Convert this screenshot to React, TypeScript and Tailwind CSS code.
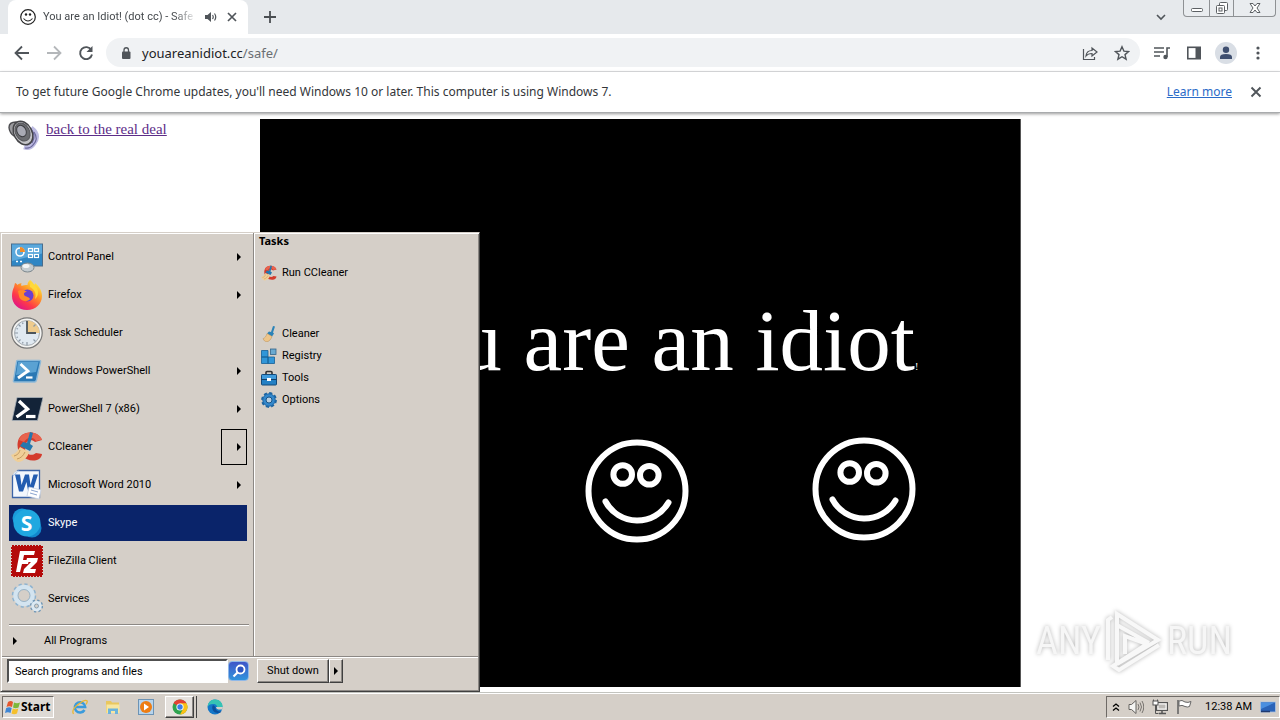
import type { ReactNode } from "react";

function Glyph({ size = "h-4 w-4", box = "0 0 16 16", children }: { size?: string; box?: string; children: ReactNode }) {
  return (
    <svg viewBox={box} className={`${size} shrink-0`} fill="none" aria-hidden="true">
      {children}
    </svg>
  );
}

const raised = "border border-t-white border-l-white border-r-[#404040] border-b-[#404040] shadow-[inset_-1px_-1px_0_#8c8884]";
const sunken = "border border-t-[#6e6a66] border-l-[#6e6a66] border-r-white border-b-white";

/* ---------- Program icons (32 x 32) ---------- */

function ControlPanelIcon() {
  return (
    <Glyph size="h-8 w-8" box="0 0 32 32">
      <rect x="0.5" y="3" width="31" height="22" fill="#2f86c4" stroke="#4a6c8a" />
      <path d="M1 3.500h30v9L1 20z" fill="#5aa8dc" />
      <circle cx="9" cy="11" r="4" stroke="#fff" strokeWidth="1.600" />
      <path d="M9 11V6a5 5 0 0 1 5 5z" fill="#f28c28" />
      <g stroke="#fff" strokeWidth="1.200">
        <rect x="17.500" y="7.500" width="4" height="3" />
        <rect x="23.500" y="7.500" width="4" height="3" />
        <rect x="17.500" y="13.500" width="4" height="3" />
        <rect x="23.500" y="13.500" width="4" height="3" />
      </g>
      <path d="M5 20.500h2M9 20.500h2" stroke="#fff" strokeWidth="1.500" />
      <ellipse cx="16.500" cy="26.500" rx="6.500" ry="4.500" fill="#c4ccd0" stroke="#7c878d" />
      <ellipse cx="15" cy="25" rx="3.500" ry="2" fill="#f2f5f6" />
    </Glyph>
  );
}

function FirefoxIcon() {
  return (
    <Glyph size="h-8 w-8" box="0 0 32 32">
      <defs>
        <linearGradient id="fx" x1="26" y1="3" x2="7" y2="29" gradientUnits="userSpaceOnUse">
          <stop offset="0" stopColor="#fff142" />
          <stop offset="0.35" stopColor="#ff9a26" />
          <stop offset="0.7" stopColor="#ff3b47" />
          <stop offset="1" stopColor="#e01587" />
        </linearGradient>
      </defs>
      <path d="M19 1c2 1 3 3 4 5 1-.5 1-1.500 1-2 3 2 7 7 7 13 0 8-6.500 14-15 14S1 25 1 17c0-4 1-7 2-9l1-4c1 0 2 1 2.500 2 1-1 2-1.500 4-2-.5 1-.5 2 0 3 2-1 4-1 6-1 0-2 1-4 2.500-5z" fill="url(#fx)" />
      <circle cx="16.500" cy="16.500" r="6" fill="#6b3fd0" />
      <path d="M7 12c3-2 7-1 9 1-3 0-4 2-2 4 2 1 4 1 5 3-3 4-10 2-11-3z" fill="#ff8a26" />
      <path d="M19 8c4 2 7 6 5 12 3-2 4-7 2-11-2-3-4-5-6-6-1 1-1 3-1 5z" fill="#ffd93a" />
    </Glyph>
  );
}

function ClockIcon() {
  return (
    <Glyph size="h-8 w-8" box="0 0 32 32">
      <circle cx="16" cy="16" r="15.200" fill="#f4f4f2" stroke="#777" strokeWidth="1.200" />
      <circle cx="16" cy="16" r="12.500" fill="#e0e9f1" stroke="#a7adb2" />
      <path d="M16 16V3.500A12.500 12.500 0 0 1 28.500 16z" fill="#eecb8d" />
      <g stroke="#8b98a4" strokeWidth="1.200">
        <path d="M16 25v3M4 16h3M7.500 7.500l2 2M7.500 24.500l2-2M24.500 24.500l-2-2M24.500 7.500l-2 2M5.500 11.500l1.500.5M11.500 5.500l.5 1.500M5.500 20.500l1.500-.5M11.500 26.500l.5-1.500" />
      </g>
      <path d="M16 4v12h9" stroke="#4c555c" strokeWidth="1.800" />
    </Glyph>
  );
}

function PowerShellIcon({ dark = false }: { dark?: boolean }) {
  return dark ? (
    <Glyph size="h-8 w-8" box="0 0 32 32">
      <path d="M6 4.500h26L26.500 27.500H1z" fill="#132338" stroke="#a9b2ba" strokeWidth="0.800" />
      <path d="M8 8l8.500 8L5.500 24" stroke="#fff" strokeWidth="3.400" />
      <path d="M15 23.500h9.500" stroke="#fff" strokeWidth="3.200" />
    </Glyph>
  ) : (
    <Glyph size="h-8 w-8" box="0 0 32 32">
      <path d="M6.500 5.500h22q1.500 0 1 1.500l-4 18q-.5 2-2 2h-20q-1.500 0-1-1.500l3-18.500q0-1.500 1-1.500z" fill="#2a78b4" stroke="#8db9d8" strokeWidth="1.400" />
      <path d="M7 7h20.500L25 17 5 20z" fill="#5aa2d3" />
      <path d="M9.500 9l7.500 7-10 7" stroke="#fff" strokeWidth="2.800" />
      <path d="M15 22.500h6.500" stroke="#fff" strokeWidth="2.200" />
    </Glyph>
  );
}

function CCleanerIcon({ size = "h-8 w-8" }: { size?: string }) {
  return (
    <Glyph size={size} box="0 0 32 32">
      <path d="M31 9C27-1 10-1 7 10c-3 12 8 22 19 19 3-1 5-4 5-6l-6-1c-5 4-11 1-11-5 0-7 6-10 10-6z" fill="#d43b2c" />
      <path d="M31 8.500C27-1 11-.5 8 9l5 2c3-5 9-6 12-1z" fill="#e8634e" />
      <path d="M19 1l3 1-3 11 3 2-3 5-10-5 3-4 4 1z" fill="#2478ae" />
      <path d="M9 16l9 5c-1 5-5 9-10 10-3 0-5-2-8-7 4-1 6-3 9-8z" fill="#f0cf98" />
      <path d="M9 19c-1 4-3 5-6 6M14 21c-2 4-4 6-8 7" stroke="#c59a61" />
    </Glyph>
  );
}

function WordIcon() {
  return (
    <Glyph size="h-8 w-8" box="0 0 32 32">
      <path d="M7 1.500h21.500v27h-27V7z" fill="#f3f7fd" stroke="#3c64a8" strokeWidth="1.300" />
      <path d="M1.500 7.500L8 1.500q-5.500.5-6.500 6z" fill="#dce8f6" />
      <path d="M4 5.500h5l1.500 10.500L14 5.500h4L19.500 16 22.500 5.500H27l-5.500 17h-4.300L15.500 13 12 22.500H8z" fill="#235cb0" />
      <path d="M18 18l12 3-2 9-12-3z" fill="#fff" stroke="#c5d0e2" strokeWidth="0.800" />
      <path d="M20 21l7 2M19 24l7 2" stroke="#8ba5cf" />
    </Glyph>
  );
}

function SkypeIcon() {
  return (
    <Glyph size="h-8 w-8" box="0 0 32 32">
      <circle cx="11" cy="11" r="9.500" fill="#1a9bdb" />
      <circle cx="21" cy="21" r="9.500" fill="#1187cd" />
      <circle cx="16" cy="16" r="13.500" fill="#20a8e0" />
      <text x="15.500" y="23.500" textAnchor="middle" fontFamily="Open Sans, sans-serif" fontWeight="700" fontSize="21" fill="#fff">S</text>
    </Glyph>
  );
}

function FileZillaIcon() {
  return (
    <Glyph size="h-8 w-8" box="0 0 32 32">
      <rect x="1" y="1" width="30" height="30" fill="#b40a0a" stroke="#b40a0a" strokeWidth="2" strokeDasharray="2 1" />
      <path d="M9 6h15l-1 4H13l-1 5h6l-1 4h-6l-2 8H5z" fill="#fff" />
      <path d="M16 13h11l-1 4-7 7h6l-1 4H12l1-4 7-7h-5z" fill="#fff" />
    </Glyph>
  );
}

function ServicesIcon() {
  return (
    <Glyph size="h-8 w-8" box="0 0 32 32">
      <circle cx="13" cy="12.500" r="10.500" stroke="#8fb3cf" strokeWidth="3.500" strokeDasharray="3 2.500" />
      <circle cx="13" cy="12.500" r="8.500" stroke="#d3e4f0" strokeWidth="4.500" />
      <circle cx="13" cy="12.500" r="6" stroke="#87a9c4" strokeWidth="0.800" />
      <circle cx="25.500" cy="23" r="5.500" stroke="#6f95b4" strokeWidth="2.200" strokeDasharray="2.200 2.120" />
      <circle cx="25.500" cy="23" r="3.800" stroke="#dbe9f3" strokeWidth="3" />
      <circle cx="25.500" cy="23" r="2" stroke="#7895ab" strokeWidth="0.800" />
    </Glyph>
  );
}

/* ---------- Task icons (16 x 16) ---------- */

function BroomIcon() {
  return (
    <Glyph>
      <path d="M12 0l2 .5-2 6 1 1-2 3-5-3 2-2 2 .5z" fill="#2b83b8" />
      <path d="M6 7.500l5 3c-1 3-3 5-5 5.200-2 0-3-1-4-3 2-1 3-2 4-5.200z" fill="#edc58a" stroke="#b98f57" strokeWidth="0.500" />
    </Glyph>
  );
}

function RegistryIcon() {
  return (
    <Glyph>
      <path d="M0.500 2.500h6.500V9H.5zM.5 9H7v6.500H.5zM7 9h6.500v6.500H7z" fill="#3196d8" stroke="#175f96" strokeWidth="0.800" />
      <rect x="9.500" y="1" width="5.500" height="5.500" fill="#69a9d0" stroke="#34658a" strokeWidth="0.800" />
    </Glyph>
  );
}

function ToolsIcon() {
  return (
    <Glyph>
      <path d="M5 4.500V2.500q0-1 1-1h4q1 0 1 1v2" stroke="#333" strokeWidth="1.600" />
      <rect x="0.500" y="4.500" width="15" height="10.500" rx="0.800" fill="#2480c4" stroke="#134a7a" />
      <path d="M1 5h14v4H1z" fill="#3f9bdc" />
      <path d="M0 9.500h16" stroke="#123f68" />
      <rect x="6" y="8" width="4" height="3" fill="#fff" />
    </Glyph>
  );
}

function OptionsIcon() {
  return (
    <Glyph>
      <circle cx="8" cy="8" r="6.600" stroke="#1d649f" strokeWidth="2.600" strokeDasharray="3 2.180" />
      <circle cx="8" cy="8" r="6.200" fill="#3388cc" stroke="#1f68a6" />
      <circle cx="8" cy="8" r="3" fill="#b9cfe0" stroke="#1a5588" />
    </Glyph>
  );
}

/* ---------- Browser ---------- */

function TabStrip() {
  return (
    <div className="flex h-[34px] shrink-0 items-start bg-[#e6e9ec]">
      <div className="ml-2 flex h-[34px] w-[240px] items-center rounded-t-lg bg-white pl-3 pr-[10px]">
        <Glyph>
          <circle cx="8" cy="8" r="7.300" fill="#fff" stroke="#222" strokeWidth="1.200" />
          <circle cx="6" cy="5.500" r="1.200" fill="#222" />
          <circle cx="10" cy="5.500" r="1.200" fill="#222" />
          <path d="M3.500 9.500q4.500 5 9 0" stroke="#222" strokeWidth="1.100" />
        </Glyph>
        <span className="ml-[7px] w-[154px] whitespace-nowrap font-['Roboto','Noto_Sans',sans-serif] text-[11px] leading-4 text-[#45494d] [mask-image:linear-gradient(to_right,black_85%,transparent)]">
          You are an Idiot! (dot cc) - Safe
        </span>
        <Glyph size="ml-2 h-3 w-3" box="0 0 12 12">
          <path d="M0 4h2.500L6 1v10L2.500 8H0z" fill="#50555a" />
          <path d="M7.500 4q1.500 2 0 4M9.500 2.500q2.500 3.500 0 7" stroke="#50555a" strokeWidth="1.200" />
        </Glyph>
        <button aria-label="Close tab" className="ml-auto">
          <Glyph size="h-3 w-3" box="0 0 12 12">
            <path d="M2 2l8 8M10 2l-8 8" stroke="#50555a" strokeWidth="1.700" />
          </Glyph>
        </button>
      </div>
      <button aria-label="New tab" className="ml-4 mt-[11px]">
        <Glyph size="h-3 w-3" box="0 0 12 12">
          <path d="M6 0v12M0 6h12" stroke="#4a4e52" strokeWidth="1.800" />
        </Glyph>
      </button>
      <button aria-label="Search tabs" className="ml-auto mr-4 mt-[11px]">
        <Glyph size="h-3 w-3" box="0 0 12 12">
          <path d="M2 4l4 4 4-4" stroke="#50555a" strokeWidth="1.600" />
        </Glyph>
      </button>
      <div className="mr-1 flex h-[17px] rounded-b-[4px] border border-t-0 border-[#8e9194] bg-[#e9ecef]">
        <button aria-label="Minimize" className="flex w-[25px] items-end justify-center pb-1">
          <Glyph size="h-1 w-3" box="0 0 12 4">
            <rect x="0.500" y="0.500" width="11" height="3" rx="1" fill="#fff" stroke="#5c6064" />
          </Glyph>
        </button>
        <button aria-label="Restore" className="flex w-[25px] items-center justify-center border-x border-[#8e9194]">
          <Glyph size="h-3 w-3" box="0 0 12 12">
            <rect x="3.500" y="0.500" width="8" height="8" rx="1" fill="#fff" stroke="#5c6064" />
            <rect x="0.500" y="3.500" width="8" height="8" rx="1" fill="#fff" stroke="#5c6064" />
            <rect x="3" y="6" width="3" height="3" stroke="#5c6064" />
          </Glyph>
        </button>
        <button aria-label="Close window" className="flex w-[41px] items-center justify-center">
          <Glyph size="h-[10px] w-3" box="0 0 12 10">
            <path d="M1 .5h3l2 2.500L8 .5h3L8 5l3 4.500H8L6 7 4 9.500H1L4 5z" fill="#fff" stroke="#5c6064" />
          </Glyph>
        </button>
      </div>
    </div>
  );
}

function Toolbar() {
  return (
    <div className="flex h-[38px] shrink-0 items-center border-b border-[#dcdee0] bg-white pl-[14px] pr-[14px]">
      <div className="flex items-center gap-4">
        <button aria-label="Back">
          <Glyph>
            <path d="M15 8H2M8 1.500L1.500 8 8 14.500" stroke="#50555a" strokeWidth="1.800" />
          </Glyph>
        </button>
        <button aria-label="Forward">
          <Glyph>
            <path d="M1 8h13M8 1.500L14.500 8 8 14.500" stroke="#b4b7ba" strokeWidth="1.800" />
          </Glyph>
        </button>
        <button aria-label="Reload">
          <Glyph>
            <path d="M13.300 5A6 6 0 1 0 14 9.500" stroke="#50555a" strokeWidth="1.900" />
            <path d="M14.500 1v6h-6z" fill="#50555a" />
          </Glyph>
        </button>
      </div>
      <div className="ml-3 flex h-[29px] flex-1 items-center rounded-full bg-[#f0f2f4] pl-[14px] pr-[10px]">
        <Glyph size="h-3 w-3" box="0 0 12 12">
          <rect x="2" y="4.500" width="8.500" height="7.500" rx="1" fill="#50555a" />
          <path d="M4 5V3a2.250 2.250 0 0 1 4.500 0v2" stroke="#50555a" strokeWidth="1.300" />
        </Glyph>
        <a href="#safe" className="ml-[10px] text-[13px] leading-5 text-[#202124]">
          youareanidiot.cc<span className="text-[#6a6e72]">/safe/</span>
        </a>
        <div className="ml-auto flex items-center gap-4">
          <button aria-label="Share">
            <Glyph>
              <path d="M1.500 4v10.500h11V12" stroke="#50555a" strokeWidth="1.200" />
              <path d="M4 11q.5-5.500 6-5.500V3l5 4-5 4V8.500q-4 0-6 2.500z" stroke="#50555a" strokeWidth="1.200" />
            </Glyph>
          </button>
          <button aria-label="Bookmark">
            <Glyph>
              <path d="M8 1.800l1.900 4.300 4.700.4-3.600 3.100 1.100 4.600L8 11.700l-4.100 2.500L5 9.600 1.400 6.500l4.700-.4z" stroke="#50555a" strokeWidth="1.400" />
            </Glyph>
          </button>
        </div>
      </div>
      <div className="ml-[14px] flex items-center gap-4">
        <button aria-label="Media controls">
          <Glyph>
            <path d="M0 3h10M0 7h10M0 11h6" stroke="#50555a" strokeWidth="1.500" />
            <path d="M13 12V3h3" stroke="#50555a" strokeWidth="1.600" />
            <circle cx="11.500" cy="12" r="2.200" fill="#50555a" />
          </Glyph>
        </button>
        <button aria-label="Side panel">
          <Glyph>
            <rect x="1.800" y="2.300" width="12.400" height="11.400" stroke="#50555a" strokeWidth="1.600" />
            <path d="M9.500 2h5v12h-5z" fill="#50555a" />
          </Glyph>
        </button>
        <button aria-label="Profile" className="-mx-[3px] flex h-[22px] w-[22px] items-center justify-center rounded-full bg-[#d9dee5]">
          <Glyph>
            <circle cx="8" cy="4.800" r="3.200" fill="#3f4f70" />
            <path d="M2 14v-2q0-3 6-3t6 3v2z" fill="#3f4f70" />
          </Glyph>
        </button>
        <button aria-label="Menu">
          <Glyph>
            <g fill="#50555a">
              <circle cx="8" cy="3" r="1.600" />
              <circle cx="8" cy="8" r="1.600" />
              <circle cx="8" cy="13" r="1.600" />
            </g>
          </Glyph>
        </button>
      </div>
    </div>
  );
}

function InfoBar() {
  return (
    <div className="z-0 flex h-[41px] shrink-0 items-center border-b border-[#a9abad] bg-white pl-4 pr-[18px] text-[12px] text-[#33363a] shadow-[0_1px_3px_#999]">
      <p>To get future Google Chrome updates, you&apos;ll need Windows 10 or later. This computer is using Windows 7.</p>
      <a href="#more" className="ml-auto text-[#2b6bc8] underline">Learn more</a>
      <button aria-label="Dismiss" className="ml-[18px]">
        <Glyph size="h-3 w-3" box="0 0 12 12">
          <path d="M1.500 1.500l9 9M10.500 1.500l-9 9" stroke="#50555a" strokeWidth="1.900" />
        </Glyph>
      </button>
    </div>
  );
}

function Face({ x, y }: { x: number; y: number }) {
  return (
    <g transform={`translate(${x} ${y})`}>
      <circle r="48.500" />
      <circle cx="-14.300" cy="-16.500" r="9.300" />
      <circle cx="12.300" cy="-15.800" r="9.300" />
      <path d="M-31.500 10.500A36 36 0 0 0 31.500 11.500" strokeLinecap="round" />
    </g>
  );
}

function Page() {
  return (
    <main className="flex flex-1 justify-center bg-white">
      <div className="flex min-w-0 flex-1 items-start px-2 pt-1.5">
        <Glyph size="h-8 w-8" box="0 0 32 32">
          <path d="M23 9q9 7 3 15-4 6-10 4" stroke="#bdbbe2" strokeWidth="5" />
          <path d="M22 9q7 7 2 15M26 13q5 7-1 13-3 4-8 3" stroke="#6d6a9c" strokeWidth="1.200" />
          <path d="M8 3Q1 3 1 8.500 1.500 14 6 17L12 6z" fill="#9a9a9e" stroke="#4c4c50" strokeWidth="1.400" />
          <ellipse cx="15" cy="14" rx="9" ry="12.500" transform="rotate(-28 15 14)" fill="#c4c4c8" stroke="#454548" strokeWidth="1.500" />
          <ellipse cx="14.500" cy="13" rx="7" ry="9.500" transform="rotate(-28 14.500 13)" fill="#6b6c70" stroke="#55565a" />
          <ellipse cx="13.500" cy="12" rx="4.500" ry="6" transform="rotate(-28 13.500 12)" fill="#a9aab4" stroke="#3c3c40" />
        </Glyph>
        <a href="#real-deal" className="ml-[6px] font-['Liberation_Serif',serif] text-[15px] leading-5 text-[#5d2d88] underline">
          back to the real deal
        </a>
      </div>
      <div className="mb-1.5 mt-[6px] flex w-[761px] flex-col items-center border-r border-[#555] bg-black pt-[172px] text-white">
        <p className="whitespace-nowrap font-['Liberation_Serif',serif] text-[87px] leading-[100px]">
          You are an idiot<span className="text-[10px]">!</span>
        </p>
        <svg viewBox="0 0 564 110" className="mt-[19px] h-[110px] w-[564px]" fill="none" stroke="#fff" strokeWidth="6" aria-label="Three smiling faces">
          <Face x={54} y={55} />
          <Face x={279} y={55} />
          <Face x={506} y={53} />
        </svg>
      </div>
      <div className="flex-1 px-2" />
    </main>
  );
}

function Watermark() {
  return (
    <div className="pointer-events-none absolute bottom-12 right-12 flex items-center gap-1 font-['Liberation_Sans_Narrow','Roboto_Condensed','Liberation_Sans',sans-serif] text-[38px] leading-none text-[#f6f6f6] [filter:drop-shadow(0_0_2px_#b5b5b5)]">
      <span>ANY</span>
      <Glyph size="h-[62px] w-[58px]" box="0 0 58 62">
        <g stroke="#f8f8f8" strokeWidth="4">
          <path d="M3 50V10l4-3" />
          <path d="M12 54V4l41 26-41 24" />
          <path d="M12 15l32 18M20 44V26l22 8-34 22 6 4 40-25" />
        </g>
      </Glyph>
      <span>RUN</span>
    </div>
  );
}

/* ---------- Start menu ---------- */

function Arrow() {
  return (
    <Glyph size="h-2 w-2" box="0 0 8 8">
      <path d="M2 0l4 4-4 4z" fill="#000" />
    </Glyph>
  );
}

type Program = { name: string; icon: ReactNode; more?: boolean; boxed?: boolean; active?: boolean };

const programs: Program[] = [
  { name: "Control Panel", icon: <ControlPanelIcon />, more: true },
  { name: "Firefox", icon: <FirefoxIcon />, more: true },
  { name: "Task Scheduler", icon: <ClockIcon /> },
  { name: "Windows PowerShell", icon: <PowerShellIcon />, more: true },
  { name: "PowerShell 7 (x86)", icon: <PowerShellIcon dark />, more: true },
  { name: "CCleaner", icon: <CCleanerIcon />, more: true, boxed: true },
  { name: "Microsoft Word 2010", icon: <WordIcon />, more: true },
  { name: "Skype", icon: <SkypeIcon />, active: true },
  { name: "FileZilla Client", icon: <FileZillaIcon /> },
  { name: "Services", icon: <ServicesIcon /> },
];

const tasks = [
  { name: "Cleaner", icon: <BroomIcon /> },
  { name: "Registry", icon: <RegistryIcon /> },
  { name: "Tools", icon: <ToolsIcon /> },
  { name: "Options", icon: <OptionsIcon /> },
];

function StartMenu() {
  return (
    <section aria-label="Start menu" className="absolute bottom-[28px] left-0 w-[480px] border border-b-[#404040] border-l-[#d5cfc8] border-r-[#404040] border-t-[#d5cfc8] bg-[#d5cfc8] font-['Roboto','Noto_Sans',sans-serif] text-[11px] leading-4 text-black shadow-[inset_1px_1px_0_#fff,inset_-1px_-1px_0_#8c8884]">
      <div className="mx-px flex border-b border-[#8c8884]">
        <div className="w-[252px] border-r border-[#8c8884] pl-[7px] pr-1 pt-[6px]">
          <ul className="flex flex-col gap-0.5">
            {programs.map((p) => (
              <li key={p.name}>
                <button className={`flex h-9 w-[238px] items-center pl-0.5 text-left ${p.active ? "bg-[#0a246a] text-white" : ""}`}>
                  {p.icon}
                  <span className="ml-[5px] flex-1">{p.name}</span>
                  {p.more && (
                    <span className={`flex h-9 w-[26px] items-center justify-center border pl-2.5 ${p.boxed ? "border-black" : "border-transparent"}`}>
                      <Arrow />
                    </span>
                  )}
                </button>
              </li>
            ))}
          </ul>
          <div className="mt-[7px] h-0.5 border-b border-t border-b-white border-t-[#8c8884]" />
          <button className="flex h-[30px] w-full items-center pl-0.5">
            <Arrow />
            <span className="ml-[25px]">All Programs</span>
          </button>
        </div>
        <div className="flex flex-1 flex-col border-l border-white pl-1">
          <h2 className="font-['Noto_Sans',sans-serif] font-bold leading-4">Tasks</h2>
          <button className="mt-[13px] flex h-[22px] items-center gap-[5px] pl-0.5">
            <CCleanerIcon size="h-4 w-4" />
            <span>Run CCleaner</span>
          </button>
          <ul className="mt-[39px]">
            {tasks.map((t) => (
              <li key={t.name}>
                <button className="flex h-[22px] items-center gap-[5px] pl-0.5">
                  {t.icon}
                  <span>{t.name}</span>
                </button>
              </li>
            ))}
          </ul>
        </div>
      </div>
      <div className="mx-px flex items-center border-t border-white px-[5px] pb-2 pt-px">
        <input
          aria-label="Search programs and files"
          defaultValue="Search programs and files"
          className="h-6 w-[221px] border-2 border-b-white border-l-[#505050] border-r-white border-t-[#505050] bg-white pl-1.5 outline-none"
        />
        <button aria-label="Search" className="flex h-5 w-[21px] items-center justify-center rounded-sm border border-[#8fb8e8] bg-linear-to-b from-[#3d55c8] to-[#2f93dc]">
          <Glyph>
            <circle cx="9.500" cy="6.500" r="4" fill="#2c54c0" stroke="#fff" strokeWidth="1.800" />
            <path d="M6.500 9.500L2.500 13.500" stroke="#fff" strokeWidth="2.200" />
          </Glyph>
        </button>
        <div className="ml-2 flex h-6">
          <button className={`w-[72px] ${raised}`}>Shut down</button>
          <button aria-label="Shut down options" className={`flex w-[14px] items-center justify-center ${raised}`}>
            <Arrow />
          </button>
        </div>
      </div>
    </section>
  );
}

/* ---------- Taskbar ---------- */

function ChromeIcon() {
  return (
    <Glyph>
      <circle cx="8" cy="8" r="7.500" fill="#2fa34f" />
      <path d="M8 8L1.500 4.250A7.500 7.500 0 0 1 14.500 4.250z" fill="#e34133" />
      <path d="M14.500 4.250A7.500 7.500 0 0 1 8 15.500L11.200 9.800 8 4.300z" fill="#fbc116" />
      <circle cx="8" cy="8" r="3.600" fill="#fff" />
      <circle cx="8" cy="8" r="2.700" fill="#3a7de8" />
    </Glyph>
  );
}

function Taskbar() {
  return (
    <footer className="flex h-[27px] shrink-0 items-center border-t border-white bg-[#d5cfc8] pl-0.5 text-[11px] text-black outline outline-[#c3c4bf]">
      <button className={`flex h-[22px] w-[52px] items-center bg-[#dedad5] pl-0.5 font-bold ${sunken}`}>
        <Glyph>
          <path d="M3 3q3-2 5 0L7 8Q4 6.500 1.500 8z" fill="#e4572e" />
          <path d="M9 3.500q3 1.500 6 0L13.500 8.500q-3 1.500-5.500 0z" fill="#7db83a" />
          <path d="M1.200 9q3-1.500 5.500 0l-1.200 5Q3 12.500 0 14z" fill="#3f86d4" />
          <path d="M7.800 9.500q3 1.500 5.500 0L12 14.500q-3 1.500-5.500 0z" fill="#f5c02c" />
        </Glyph>
        <span className="text-[12px]">Start</span>
      </button>
      <div className="ml-[18px] flex items-center gap-[17px]">
        <button aria-label="Internet Explorer">
          <Glyph>
            <path d="M12.500 11A5.200 5.200 0 1 1 13.200 8H4" stroke="#3a9bdc" strokeWidth="2.500" />
            <path d="M1.500 15Q-1 11 6 5.500 13 0 15 1.800q.8 1-1 3.500" stroke="#e9b733" strokeWidth="1.300" />
          </Glyph>
        </button>
        <button aria-label="File Explorer">
          <Glyph>
            <path d="M1 2h5l1 1.500h7V14H1z" fill="#e9c75e" />
            <path d="M1.500 5.500h13V14h-13z" fill="#f7e6a0" />
            <path d="M3 15V9.500h10V15h-3v-3H6v3z" fill="#6cb4dc" />
          </Glyph>
        </button>
        <button aria-label="Media Player">
          <Glyph>
            <rect x="0.500" y="0.500" width="15" height="15" fill="#b7d4ec" stroke="#6c93b5" />
            <circle cx="8" cy="8" r="6" fill="#ee7d12" />
            <path d="M6 4.500l5 3.500-5 3.500z" fill="#fff" />
          </Glyph>
        </button>
      </div>
      <button aria-label="Google Chrome" className={`ml-[11px] flex h-[22px] w-[29px] items-center justify-center bg-[#e6e2de] ${raised}`}>
        <ChromeIcon />
      </button>
      <span className="h-[22px] w-[3px] border-r border-[#404040]" />
      <button aria-label="Microsoft Edge" className="ml-2.5">
        <Glyph>
          <circle cx="8" cy="8" r="7.500" fill="#1477c9" />
          <path d="M.6 8C1 3 4 .5 8 .5c5 0 7.500 3.500 7.500 6.500S13 11 10 10c1-3-1-5-4-5S1.500 6 .6 8z" fill="#35c3b4" />
          <path d="M6 6c-2 3 0 8 5 8 2 0 3-1 3.500-1.500C11 13 8 11 8.500 8z" fill="#0c4f9c" />
          <path d="M9 8q0 3 6 2.500L16 8z" fill="#d5cfc8" />
        </Glyph>
      </button>
      <div className={`ml-auto flex h-[22px] items-center pl-[5px] pr-[3px] ${sunken}`}>
        <button aria-label="Show hidden icons">
          <Glyph size="h-2 w-2" box="0 0 8 8">
            <path d="M1 3.500L4 1l3 2.500M1 7.500L4 5l3 2.500" stroke="#000" strokeWidth="1.300" />
          </Glyph>
        </button>
        <div className="ml-2 flex items-center gap-2">
          <Glyph>
            <path d="M1 5.500h2.500L8 1.500v13L3.500 10.500H1z" fill="#f5f5f3" stroke="#65625f" />
            <path d="M10 5q2 3 0 6M12 3.500q3 4.500 0 9M14 2q3.500 6 0 12" stroke="#77736f" />
          </Glyph>
          <Glyph>
            <rect x="4.500" y="3.500" width="11" height="8" fill="#bcb9b5" stroke="#555" />
            <rect x="6" y="5" width="8" height="5" stroke="#fff" />
            <path d="M7 14.500h7M10 12v2" stroke="#555" strokeWidth="1.500" />
            <path d="M1.500.5v5h4v-5M3.500 6v8.500h3" stroke="#555" />
            <rect x="1" y="2" width="5" height="4" fill="#fff" stroke="#555" />
          </Glyph>
          <Glyph>
            <path d="M2 1v14" stroke="#666" strokeWidth="1.600" />
            <path d="M3 2q3-1.500 6 1 3 1 6-.5l-1.500 5q-2 1-4.500 0-3-2-6-.5z" fill="#fff" stroke="#666" />
          </Glyph>
        </div>
        <time className="ml-[13px] font-['Roboto','Noto_Sans',sans-serif]">12:38 AM</time>
        <button aria-label="Show desktop" className="ml-2">
          <Glyph>
            <rect x="0.500" y="3" width="15" height="10" fill="#2a63b8" stroke="#acc4e2" strokeWidth="0.800" />
            <path d="M1 3.500h14L1 10z" fill="#4a8fe0" />
            <path d="M1 12.500h9" stroke="#203a70" strokeWidth="1.500" />
          </Glyph>
        </button>
      </div>
    </footer>
  );
}

export default function App() {
  return (
    <div className="relative flex h-screen flex-col overflow-hidden bg-white font-['Noto_Sans','Open_Sans',sans-serif]">
      <TabStrip />
      <Toolbar />
      <InfoBar />
      <Page />
      <Watermark />
      <StartMenu />
      <Taskbar />
    </div>
  );
}
